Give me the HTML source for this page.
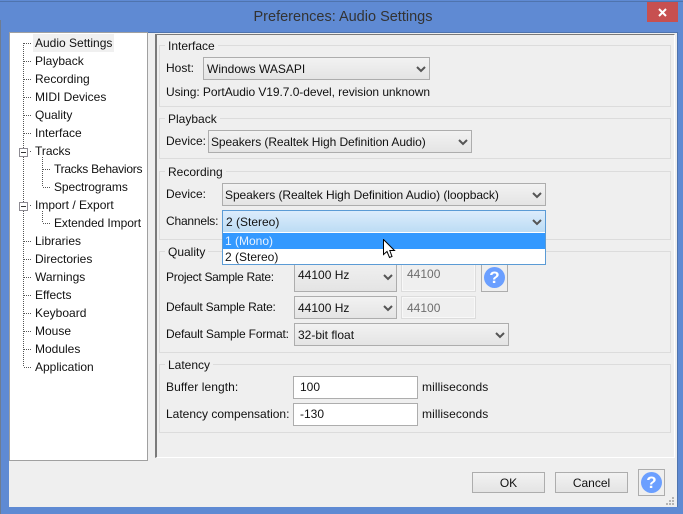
<!DOCTYPE html>
<html><head><meta charset="utf-8"><style>
html,body{margin:0;padding:0}
body{width:683px;height:514px;overflow:hidden;position:relative;background:#5f8ad3;font-family:"Liberation Sans",sans-serif;font-size:12px;color:#111}
div,span{position:absolute;box-sizing:border-box;white-space:nowrap}
.t{line-height:16px;height:16px}
.g{border:1px solid #dcdcdc}
.c{border:1px solid #adadad;background:linear-gradient(#f2f2f2,#e4e4e4);line-height:22px;padding-left:3px}
.c svg{position:absolute;right:3px;top:8px}
.f{border:1px solid #dcdcdc;outline:1px solid #f8f8f8;outline-offset:-2px;background:#efefef;color:#6d6d6d;padding-left:5px;line-height:22px}
.i{border:1px solid #adadad;background:#fff;padding-left:6px;line-height:21px}
.l{background:#efefef;padding:0 3px;line-height:16px;height:16px}
.b{border:1px solid #adadad;background:linear-gradient(#f2f2f2,#e4e4e4);text-align:center}
.q{border:1px solid #adadad;background:#efefef}
.q i{position:absolute;border-radius:50%;background:#6b9fff;color:#fff;font:bold 17px/21px "Liberation Sans",sans-serif;text-align:center;width:21px;height:21px}
</style></head><body>
<div style="left:0;top:1px;width:683px;height:1px;background:#4f74ae"></div>
<div style="left:0;top:20px;width:1px;height:494px;background:#6e7c91"></div>
<div class="t" style="left:0;top:8px;width:683px;text-align:center;font-size:14.5px;line-height:18px;height:18px;color:#333;padding-left:3px">Preferences: Audio Settings</div>
<div style="left:647px;top:2px;width:31px;height:20px;background:#c75050"></div>
<svg style="position:absolute;left:658px;top:8px" width="9" height="9"><path d="M1 1L8 8M8 1L1 8" stroke="#fff" stroke-width="2"/></svg>

<div style="left:9px;top:32px;width:669px;height:475px;background:#efefef;border:1px solid #4f74ae;border-width:1px 1px 0 0"></div>

<div style="left:9px;top:32px;width:139px;height:429px;background:#fff;border:1px solid #a0a0a0"></div>
<div style="left:33px;top:34px;width:81px;height:18px;background:#f0f0f0"></div>
<svg style="position:absolute;left:10px;top:33px" width="40" height="340" shape-rendering="crispEdges">
<g stroke="#555" stroke-dasharray="1 1" fill="none">
<path d="M13.5 10V334"/>
<path d="M14 10.5h8M14 28.5h8M14 46.5h8M14 64.5h8M14 82.5h8M14 100.5h8M20 118.5h2M20 172.5h2M14 208.5h8M14 226.5h8M14 244.5h8M14 262.5h8M14 280.5h8M14 298.5h8M14 316.5h8M14 334.5h8"/>
<path d="M32.5 124V154M33 136.5h8M33 154.5h8M32.5 178V190M33 190.5h8"/>
</g>
<g fill="#fff" stroke="#8d8a92"><rect x="9.5" y="115.5" width="8" height="8"/><rect x="9.5" y="169.5" width="8" height="8"/></g>
<path d="M11 119.5h5M11 173.5h5" stroke="#333"/>
</svg>
<div class="t" style="left:35px;top:35px">Audio Settings</div>
<div class="t" style="left:35px;top:53px">Playback</div>
<div class="t" style="left:35px;top:71px">Recording</div>
<div class="t" style="left:35px;top:89px">MIDI Devices</div>
<div class="t" style="left:35px;top:107px">Quality</div>
<div class="t" style="left:35px;top:125px">Interface</div>
<div class="t" style="left:35px;top:143px">Tracks</div>
<div class="t" style="left:54px;top:161px;letter-spacing:-.25px">Tracks Behaviors</div>
<div class="t" style="left:54px;top:179px;letter-spacing:-.08px">Spectrograms</div>
<div class="t" style="left:35px;top:197px">Import / Export</div>
<div class="t" style="left:54px;top:215px;letter-spacing:-.07px">Extended Import</div>
<div class="t" style="left:35px;top:233px">Libraries</div>
<div class="t" style="left:35px;top:251px">Directories</div>
<div class="t" style="left:35px;top:269px">Warnings</div>
<div class="t" style="left:35px;top:287px">Effects</div>
<div class="t" style="left:35px;top:305px">Keyboard</div>
<div class="t" style="left:35px;top:323px">Mouse</div>
<div class="t" style="left:35px;top:341px">Modules</div>
<div class="t" style="left:35px;top:359px">Application</div>

<div style="left:155px;top:34px;width:520px;height:424px;border-style:solid;border-width:1px 1px 1px 2px;border-color:#7a7a7a #fff #fff #7a7a7a"></div>

<div class="g" style="left:159px;top:45px;width:512px;height:62px"></div>
<div class="l" style="left:165px;top:38px">Interface</div>
<div class="t" style="left:166px;top:60px">Host:</div>
<div class="c" style="left:203px;top:57px;width:227px;height:23px">Windows WASAPI<svg width="10" height="7"><path d="M1 1L5 5L9 1" stroke="#555" stroke-width="2" fill="none"/></svg></div>
<div class="t" style="left:166px;top:84px;letter-spacing:-.06px">Using: PortAudio V19.7.0-devel, revision unknown</div>

<div class="g" style="left:159px;top:118px;width:512px;height:41px"></div>
<div class="l" style="left:165px;top:111px">Playback</div>
<div class="t" style="left:166px;top:133px">Device:</div>
<div class="c" style="left:208px;top:130px;width:264px;height:23px;padding-left:2px;letter-spacing:-.07px">Speakers (Realtek High Definition Audio)<svg width="10" height="7"><path d="M1 1L5 5L9 1" stroke="#555" stroke-width="2" fill="none"/></svg></div>

<div class="g" style="left:159px;top:171px;width:512px;height:69px"></div>
<div class="l" style="left:165px;top:164px">Recording</div>
<div class="t" style="left:166px;top:186px">Device:</div>
<div class="c" style="left:222px;top:183px;width:324px;height:23px;padding-left:2px;letter-spacing:-.06px">Speakers (Realtek High Definition Audio) (loopback)<svg width="10" height="7"><path d="M1 1L5 5L9 1" stroke="#555" stroke-width="2" fill="none"/></svg></div>
<div class="t" style="left:166px;top:213px;letter-spacing:-.2px">Channels:</div>

<div class="g" style="left:159px;top:251px;width:512px;height:102px"></div>
<div class="l" style="left:165px;top:244px">Quality</div>
<div class="t" style="left:166px;top:269px;letter-spacing:-.28px">Project Sample Rate:</div>
<div class="c" style="left:294px;top:258px;width:103px;height:34px;line-height:32px">44100 Hz<svg style="top:15px" width="10" height="7"><path d="M1 1L5 5L9 1" stroke="#555" stroke-width="2" fill="none"/></svg></div>
<div class="f" style="left:401px;top:258px;width:75px;height:34px;line-height:30px">44100</div>
<div class="q" style="left:481px;top:262px;width:27px;height:30px"><i style="top:4px;left:2px">?</i></div>
<div class="t" style="left:166px;top:299px;letter-spacing:-.22px">Default Sample Rate:</div>
<div class="c" style="left:294px;top:296px;width:103px;height:23px">44100 Hz<svg width="10" height="7"><path d="M1 1L5 5L9 1" stroke="#555" stroke-width="2" fill="none"/></svg></div>
<div class="f" style="left:401px;top:296px;width:75px;height:23px">44100</div>
<div class="t" style="left:166px;top:326px;letter-spacing:-.18px">Default Sample Format:</div>
<div class="c" style="left:294px;top:323px;width:215px;height:23px">32-bit float<svg width="10" height="7"><path d="M1 1L5 5L9 1" stroke="#555" stroke-width="2" fill="none"/></svg></div>

<div class="g" style="left:159px;top:364px;width:512px;height:69px"></div>
<div class="l" style="left:165px;top:357px">Latency</div>
<div class="t" style="left:166px;top:379px;letter-spacing:.08px">Buffer length:</div>
<div class="i" style="left:293px;top:376px;width:125px;height:23px">100</div>
<div class="t" style="left:422px;top:379px;letter-spacing:.08px">milliseconds</div>
<div class="t" style="left:166px;top:406px">Latency compensation:</div>
<div class="i" style="left:293px;top:403px;width:125px;height:23px">-130</div>
<div class="t" style="left:422px;top:406px;letter-spacing:.08px">milliseconds</div>

<div class="c" style="left:222px;top:210px;width:324px;height:23px;border-color:#5b9bd5;background:linear-gradient(#dcecfc,#bcdcf4)">2 (Stereo)<svg width="10" height="7"><path d="M1 1L5 5L9 1" stroke="#555" stroke-width="2" fill="none"/></svg></div>
<div style="left:222px;top:232px;width:324px;height:33px;background:#fff;border:1px solid #5b9bd5;border-top:0"></div>
<div class="t" style="left:223px;top:233px;width:322px;height:16px;background:#3399ff;color:#e8f2ff;padding-left:2px;line-height:17px">1 (Mono)</div>
<div class="t" style="left:225px;top:249px;height:15px;line-height:16px">2 (Stereo)</div>

<svg style="position:absolute;left:383px;top:239px" width="14" height="20"><path d="M0.5 0.5V15.5L4 12.5L6.5 18.5L9 17.5L6.8 11.5H11.5Z" fill="#fff" stroke="#000" stroke-width="1"/></svg>

<div class="b" style="left:472px;top:472px;width:73px;height:21px;line-height:20px">OK</div>
<div class="b" style="left:555px;top:472px;width:73px;height:21px;line-height:20px">Cancel</div>
<div class="q" style="left:638px;top:469px;width:27px;height:27px"><i style="top:2px;left:2px">?</i></div>
<svg style="position:absolute;left:665px;top:496px" width="10" height="10"><g fill="#b4b4b4"><rect x="7" y="1" width="2" height="2"/><rect x="4" y="4" width="2" height="2"/><rect x="7" y="4" width="2" height="2"/><rect x="1" y="7" width="2" height="2"/><rect x="4" y="7" width="2" height="2"/><rect x="7" y="7" width="2" height="2"/></g></svg>
</body></html>
